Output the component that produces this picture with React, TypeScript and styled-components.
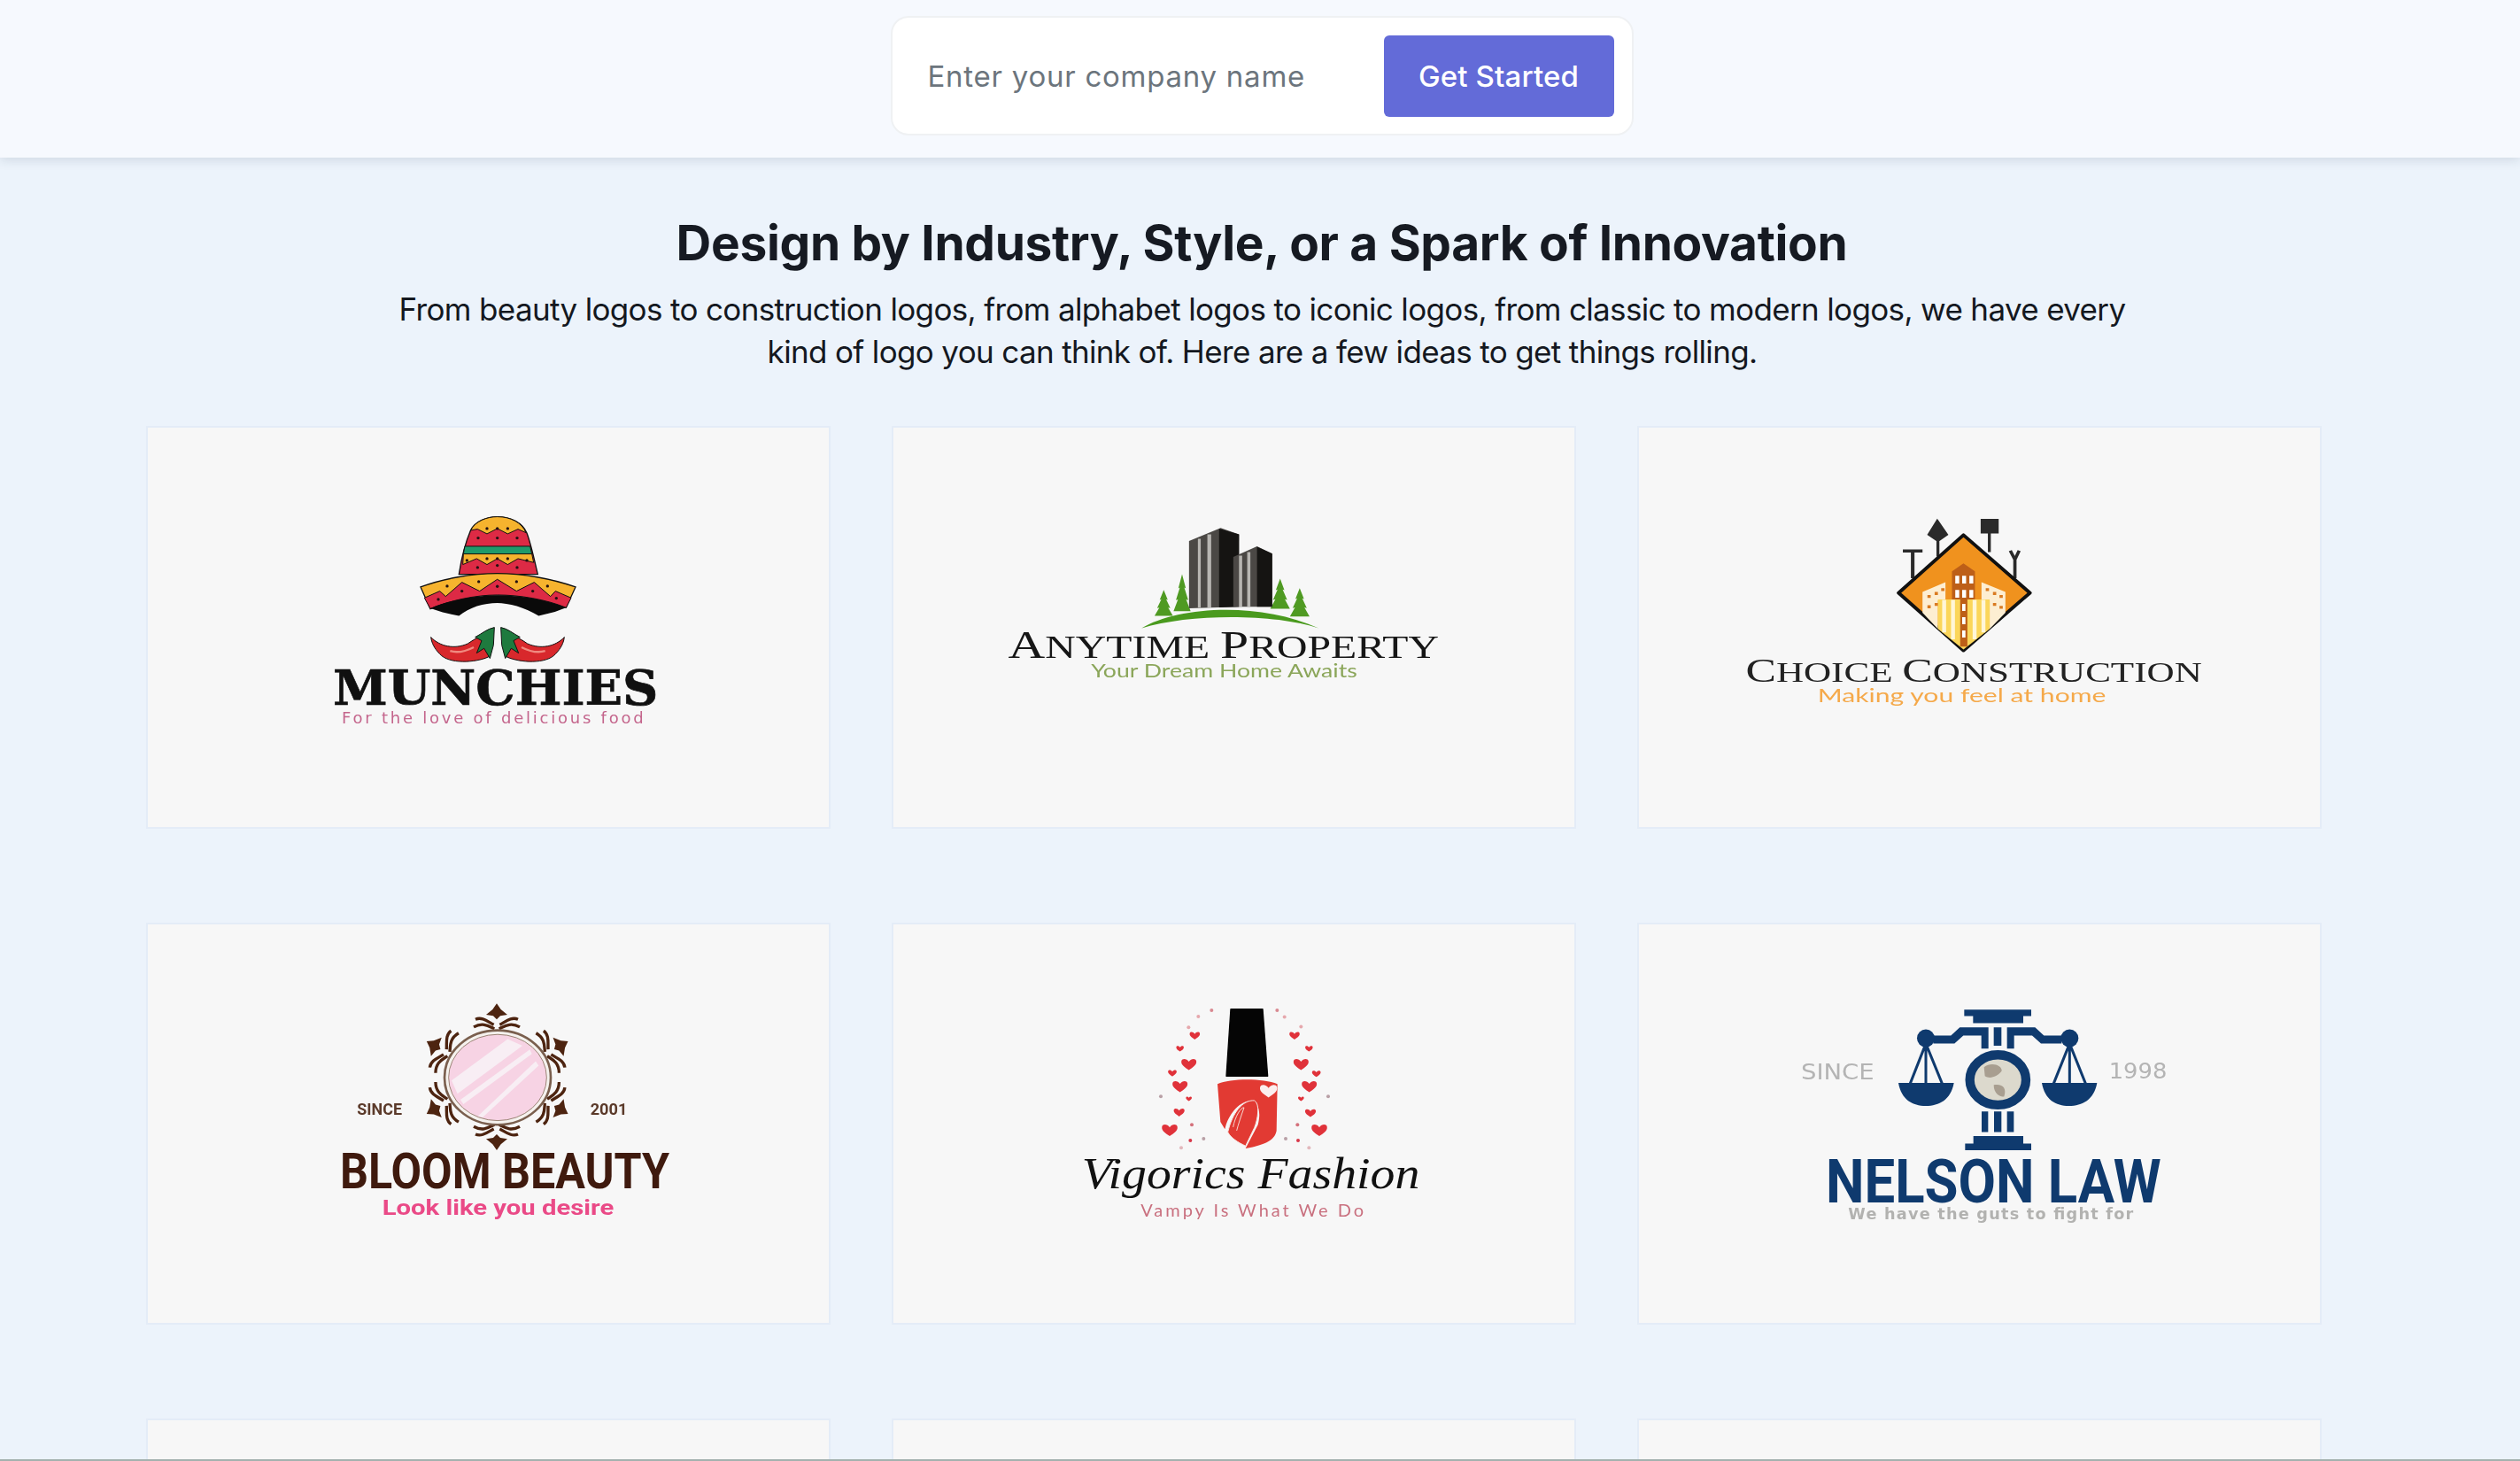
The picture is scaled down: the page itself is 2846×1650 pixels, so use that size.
import React from "react";
import styled, { createGlobalStyle } from "styled-components";

const Global = createGlobalStyle`
  html, body { margin: 0; padding: 0; background: #ecf3fb; }
  body { font-family: Inter, "Liberation Sans", sans-serif; }
  * { box-sizing: border-box; }
`;

const Page = styled.div`
  width: 100%;
  height: 1650px;
  display: flex;
  flex-direction: column;
  overflow: hidden;
  background: #ecf3fb;
`;

const Header = styled.header`
  flex: 0 0 178px;
  position: relative;
  z-index: 1;
  display: flex;
  justify-content: center;
  align-items: flex-start;
  padding-top: 18px;
  padding-left: 4px;
  background: #f6f9fe;
  box-shadow: 0 2px 12px rgba(40, 60, 90, 0.16);
`;

const CompanyForm = styled.form`
  width: 839px;
  height: 135px;
  display: flex;
  align-items: center;
  justify-content: space-between;
  padding: 0 20px 0 38px;
  background: #fff;
  border: 2px solid #eff1f3;
  border-radius: 20px;
`;

const CompanyInput = styled.input`
  width: 480px;
  border: 0;
  outline: 0;
  padding: 0 2px;
  background: transparent;
  font-family: Inter, "Liberation Sans", sans-serif;
  font-size: 33px;
  letter-spacing: 0.75px;
  color: #6c757d;
  &::placeholder { color: #6c757d; opacity: 1; }
`;

const SubmitButton = styled.button`
  width: 260px;
  height: 92px;
  border: 0;
  border-radius: 6px;
  background: #636bd8;
  color: #fff;
  font-family: Inter, "Liberation Sans", sans-serif;
  font-size: 33px;
  font-weight: 500;
  letter-spacing: 0.15px;
`;

const Main = styled.main`
  flex: 1;
  min-height: 0;
  overflow: hidden;
  padding-top: 60px;
`;

const Title = styled.h1`
  margin: 0 0 15px;
  padding-left: 4px;
  text-align: center;
  font-size: 55px;
  line-height: 72px;
  font-weight: 700;
  letter-spacing: -0.33px;
  color: #161a22;
`;

const Lead = styled.p`
  width: 1985px;
  margin: 0 0 60px 433px;
  text-align: center;
  font-size: 35px;
  line-height: 48px;
  font-weight: 400;
  letter-spacing: -0.65px;
  color: #14181f;
`;

const LogoGrid = styled.section`
  width: 2457px;
  margin-left: 165px;
  display: grid;
  grid-template-columns: repeat(3, 1fr);
  grid-auto-rows: 454.5px;
  column-gap: 69px;
  row-gap: 106px;
`;

const LogoCard = styled.article`
  background: #f7f7f7;
  border: 2px solid #e4ecf7;
`;

const LogoArt = styled.svg`
  display: block;
  width: 100%;
  height: 100%;
  filter: blur(0.55px);
`;

const BottomEdge = styled.div`
  flex: 0 0 2px;
  background: #a3b1ae;
`;

const LogoText = styled.text<{ $font: string; $weight?: number; $color: string; $italic?: boolean }>`
  font-family: ${(p) => p.$font};
  font-weight: ${(p) => p.$weight ?? 400};
  font-style: ${(p) => (p.$italic ? "italic" : "normal")};
  fill: ${(p) => p.$color};
`;

const SERIF = '"Liberation Serif", serif';
const SLAB = '"DejaVu Serif", serif';
const SANS = 'Lato, "Liberation Sans", sans-serif';
const DEJAVU = '"DejaVu Sans", sans-serif';
const ROBOTO = 'Roboto, "Liberation Sans", sans-serif';

const Munchies = () => (
  <g transform="translate(173 77) scale(.33333)">
    <path d="M535,265 C545,200 560,150 575,115 C590,85 630,70 665,70 C710,70 750,90 765,125 C780,165 790,215 802,265 Z" fill="#dd2a45" stroke="#111" strokeWidth="4" />
    <path d="M575,116 C590,85 630,70 665,70 C710,70 748,90 762,124 L735,112 L700,128 L665,110 L630,128 L598,112 Z" fill="#f6b32e" stroke="#111" strokeWidth="3" />
    <path d="M555,170 L776,170 L782,196 L550,196 Z" fill="#1f9a6b" stroke="#111" strokeWidth="3" />
    <path d="M550,196 L782,196 L788,225 L735,212 L700,232 L665,212 L630,232 L595,212 L548,232 Z" fill="#f6b32e" stroke="#111" strokeWidth="3" />
    <path d="M405,308 C480,280 580,262 665,262 C750,262 850,280 930,308 L898,378 C830,350 740,335 665,335 C590,335 500,355 438,382 Z" fill="#f6b32e" stroke="#111" strokeWidth="4" />
    <path d="M418,345 L470,322 L490,340 L545,292 L605,322 L665,282 L730,322 L790,292 L845,340 L862,322 L915,345 L898,378 C830,350 740,335 665,335 C590,335 500,355 438,382 Z" fill="#dd2a45" stroke="#111" strokeWidth="3" />
    <path d="M438,380 C500,352 600,336 665,336 C740,336 830,350 898,378 L860,392 L805,406 C760,376 700,362 665,362 C620,362 570,376 535,406 L480,394 Z" fill="#0a0a0a" />
    {[[630,110],[665,110],[700,110],[600,142],[665,142],[732,142],[562,218],[630,212],[665,212],[700,212],[765,218],[598,242],[665,235],[732,242],[495,305],[602,290],[730,290],[835,305],[545,322],[665,306],[785,322],[465,350],[865,346]].map(([x,y]) => (
      <circle key={`${x}-${y}`} cx={x} cy={y} r="5" fill="#211" />
    ))}
    {[0, 1].map((i) => (
      <g key={i} transform={i ? "translate(1332 0) scale(-1 1)" : undefined}>
        <path d="M440,478 C470,510 520,520 565,500 C580,490 595,480 610,475 L640,520 L635,545 C590,565 500,570 470,535 C450,515 442,495 440,478 Z" fill="#d8282c" stroke="#111" strokeWidth="3" />
        <path d="M505,525 C530,532 560,525 585,512" fill="none" stroke="#f08a80" strokeWidth="7" />
        <path d="M655,445 C630,450 615,465 590,478 L612,490 L595,532 L620,516 L640,550 L652,505 Z" fill="#1e7a3e" stroke="#111" strokeWidth="3" />
      </g>
    ))}
    <LogoText x="108" y="708" fontSize="165" textLength="1102" lengthAdjust="spacingAndGlyphs" stroke="#101010" strokeWidth="2" $font={SLAB} $weight={700} $color="#101010">MUNCHIES</LogoText>
    <LogoText x="138" y="770" fontSize="54" textLength="1022" lengthAdjust="spacing" $font={DEJAVU} $color="#c4658c">For the love of delicious food</LogoText>
  </g>
);

const Pine = ({ x, base, top, w }: { x: number; base: number; top: number; w: number }) => {
  const h = base - top;
  return (
    <path
      fill="#4f9a22"
      d={`M${x},${top} L${x + w * 0.22},${top + h * 0.38} L${x + w * 0.13},${top + h * 0.36} L${x + w * 0.36},${top + h * 0.7} L${x + w * 0.24},${top + h * 0.68} L${x + w / 2},${base} L${x - w / 2},${base} L${x - w * 0.24},${top + h * 0.68} L${x - w * 0.36},${top + h * 0.7} L${x - w * 0.13},${top + h * 0.36} L${x - w * 0.22},${top + h * 0.38} Z`}
    />
  );
};

const Anytime = () => (
  <g transform="translate(91 87) scale(.35714 .33333)">
    <Pine x={600} top={288} base={376} w={58} />
    <Pine x={658} top={235} base={360} w={54} />
    <Pine x={968} top={250} base={352} w={62} />
    <Pine x={1030} top={282} base={378} w={62} />
    <path d="M680,122 L780,78 L838,100 L838,345 L680,350 Z" fill="#4b4845" />
    <path d="M775,80 L838,100 L838,345 L775,347 Z" fill="#151412" />
    <path d="M708,115 h9 V348 h-9 Z M738,100 h12 V347 h-12 Z" fill="#b8b6b2" />
    <path d="M820,176 L895,140 L943,165 L943,345 L820,345 Z" fill="#4b4845" />
    <path d="M895,142 L943,165 L943,345 L895,345 Z" fill="#151412" />
    <path d="M838,172 h10 V345 h-10 Z M864,160 h10 V345 h-10 Z" fill="#b8b6b2" />
    <path d="M530,418 C640,345 900,325 1090,418 C950,368 680,368 530,418 Z" fill="#4a9a1e" />
    <LogoText x="108" y="518" fontSize="133" textLength="1362" lengthAdjust="spacingAndGlyphs" $font={SERIF} $color="#161616">
      A<tspan fontSize="110">NYTIME </tspan>P<tspan fontSize="110">ROPERTY</tspan>
    </LogoText>
    <LogoText x="370" y="585" fontSize="64" textLength="842" lengthAdjust="spacingAndGlyphs" $font={SANS} $color="#8ba65a">Your Dream Home Awaits</LogoText>
  </g>
);

const Choice = () => (
  <g transform="translate(89 77) scale(.36996 .33333)">
    <g stroke="#2a2a2a" fill="#2a2a2a">
      <path d="M565,186 H625 M595,186 V278" fill="none" strokeWidth="11" />
      <path d="M670,85 L698,130 L672,150 L645,130 Z M672,150 V205" strokeWidth="9" />
      <path d="M807,82 H853 V122 H807 Z M829,122 V190" strokeWidth="9" />
      <path d="M893,185 L907,215 L920,185 M907,215 V278" fill="none" strokeWidth="10" />
    </g>
    <path d="M750,132 L953,328 L750,523 L552,328 Z" fill="#f0921e" stroke="#111" strokeWidth="11" strokeLinejoin="round" />
    <path d="M625,325 L695,292 V355 H672 V450 L625,395 Z M805,292 L878,325 V395 L830,450 V355 H805 Z" fill="#fdeed2" />
    <path d="M672,350 H830 V450 L750,520 L672,450 Z" fill="#fbd65a" />
    <path d="M685,352 h12 V462 h-12 Z M712,352 h12 V485 h-12 Z M778,352 h12 V485 h-12 Z M805,352 h12 V462 h-12 Z" fill="#fff6d8" />
    <path d="M715,255 L750,228 L785,255 V350 H762 V510 H740 V350 H715 Z" fill="#bd5f18" />
    <path d="M725,270 h12 v26 h-12 Z M746,270 h12 v26 h-12 Z M768,270 h12 v26 h-12 Z M725,318 h12 v26 h-12 Z M746,318 h12 v26 h-12 Z M768,318 h12 v26 h-12 Z M746,365 h10 v24 h-10 Z M746,410 h10 v24 h-10 Z M746,455 h10 v24 h-10 Z" fill="#fff" />
    <path d="M640,335 h10 v10 h-10 Z M662,325 h10 v10 h-10 Z M682,312 h10 v10 h-10 Z M640,370 h10 v10 h-10 Z M662,362 h10 v10 h-10 Z M818,312 h10 v10 h-10 Z M840,325 h10 v10 h-10 Z M860,335 h10 v10 h-10 Z M840,362 h10 v10 h-10 Z M860,372 h10 v10 h-10 Z" fill="#d97a20" />
    <LogoText x="85" y="628" fontSize="115" textLength="1393" lengthAdjust="spacingAndGlyphs" $font={SERIF} $color="#222">
      C<tspan fontSize="96">HOICE </tspan>C<tspan fontSize="96">ONSTRUCTION</tspan>
    </LogoText>
    <LogoText x="305" y="698" fontSize="66" textLength="880" lengthAdjust="spacingAndGlyphs" $font={SANS} $color="#f5a94a">Making you feel at home</LogoText>
  </g>
);

const Ornament = ({ x, y, a }: { x: number; y: number; a: number }) => (
  <g transform={`translate(${x} ${y}) rotate(${a})`}>
    <path d="M0,-26 L14,-6 L36,12 L12,16 L0,28 L-12,16 L-36,12 L-14,-6 Z" fill="#4d2410" />
    <path d="M-72,28 C-50,18 -30,36 -10,46 M-78,54 C-46,36 -26,52 -8,60 M72,28 C50,18 30,36 10,46 M78,54 C46,36 26,52 8,60" fill="none" stroke="#4d2410" strokeWidth="10" />
  </g>
);

const Bloom = () => (
  <g transform="translate(193 66) scale(.33333)">
    {[[603,95,0],[822,210,60],[822,430,120],[603,540,180],[388,430,240],[388,210,300]].map(([x,y,a]) => (
      <Ornament key={a} x={x} y={y} a={a} />
    ))}
    <ellipse cx="606" cy="320" rx="180" ry="160" fill="#f5f2ee" stroke="#7a5f4e" strokeWidth="8" />
    <ellipse cx="606" cy="320" rx="166" ry="146" fill="#f7d3e4" stroke="#9b8474" strokeWidth="3" />
    <path d="M450,330 L640,190 L690,212 L470,375 Z M480,395 L715,225 L722,240 L490,410 Z M540,450 L735,265 L745,280 L555,455 Z" fill="#f8eef4" />
    <LogoText x="130" y="445" fontSize="54" textLength="152" lengthAdjust="spacingAndGlyphs" $font={ROBOTO} $weight={700} $color="#5b3a2a">SINCE</LogoText>
    <LogoText x="920" y="445" fontSize="54" textLength="125" lengthAdjust="spacingAndGlyphs" $font={ROBOTO} $weight={700} $color="#5b3a2a">2001</LogoText>
    <LogoText x="72" y="695" fontSize="165" textLength="1116" lengthAdjust="spacingAndGlyphs" $font={ROBOTO} $weight={700} $color="#3f1a0e">BLOOM BEAUTY</LogoText>
    <LogoText x="215" y="785" fontSize="70" textLength="785" lengthAdjust="spacingAndGlyphs" $font={ROBOTO} $weight={700} $color="#ea4a87">Look like you desire</LogoText>
  </g>
);

const Heart = ({ x, y, s, fill = "#e0323a" }: { x: number; y: number; s: number; fill?: string }) => (
  <path transform={`translate(${x} ${y}) scale(${s})`} d="M0,14 C-8,8 -20,2 -18,-8 C-16,-15 -5,-14 0,-6 C5,-14 16,-15 18,-8 C20,2 8,8 0,14 Z" fill={fill} />
);

const Vigorics = () => (
  <g transform="translate(181 66) scale(.33333)">
    <path d="M600,88 H708 L725,315 H585 Z" fill="#050505" stroke="#050505" strokeWidth="4" strokeLinejoin="round" />
    <path d="M555,342 C600,322 710,322 758,342 L755,500 C750,530 720,548 650,560 L692,480 C705,430 690,395 660,400 C625,405 590,450 580,495 L565,470 Z" fill="#e23a33" />
    <path d="M590,505 C605,440 640,395 680,398 C700,410 692,460 680,490 L650,552 C625,540 600,525 590,505 Z" fill="#e23a33" stroke="#f7e6e2" strokeWidth="3" />
    <path d="M608,488 C615,450 635,420 645,422 C635,450 625,480 620,500" fill="none" stroke="#f7d9d2" strokeWidth="3" />
    <Heart x={728} y={365} s={1.6} fill="#fbeeee" />
    {[[478,178,.95],[428,222,.7],[458,275,1.4],[402,305,.8],[428,350,1.4],[458,392,.55],[425,438,1],[393,498,1.45],[816,178,.95],[865,222,.7],[838,275,1.4],[890,307,.8],[866,350,1.4],[838,392,.55],[870,440,1],[900,498,1.45]].map(([x,y,s]) => (
      <Heart key={`${x}-${y}`} x={x} y={y} s={s} />
    ))}
    {[[535,92,"#d98a92"],[490,113,"#e6a8ad"],[457,150,"#e6a8ad"],[363,384,"#b9a0a6"],[468,480,"#d4717b"],[463,533,"#d8384a"],[508,527,"#b9a0a6"],[432,558,"#e2b8bc"],[757,92,"#d98a92"],[782,115,"#e6a8ad"],[838,148,"#e6a8ad"],[930,384,"#b9a0a6"],[826,480,"#d4717b"],[828,533,"#d8384a"],[786,527,"#b9a0a6"],[865,558,"#e2b8bc"]].map(([x,y,c]) => (
      <circle key={`${x}-${y}`} cx={x as number} cy={y as number} r="6" fill={c as string} />
    ))}
    <LogoText x="95" y="695" fontSize="150" textLength="1145" lengthAdjust="spacingAndGlyphs" $font={SERIF} $italic $color="#111">Vigorics Fashion</LogoText>
    <LogoText x="295" y="790" fontSize="60" textLength="755" lengthAdjust="spacing" $font={SANS} $color="#c9707f">Vampy Is What We Do</LogoText>
  </g>
);

const NAVY = "#0f3a6e";

const Nelson = () => (
  <g transform="translate(149 66) scale(.33333)">
    <path d="M655,90 H882 V112 H855 V136 H685 V112 H655 Z" fill={NAVY} />
    <path d="M755,150 H781 V212 H755 Z M800,150 H895 L925,178 H985 V205 H915 L885,178 H824 V222 H800 Z M737,150 H640 L610,178 H550 V205 H622 L652,178 H713 V222 H737 Z" fill={NAVY} />
    <circle cx="525" cy="187" r="30" fill={NAVY} />
    <circle cx="1012" cy="187" r="30" fill={NAVY} />
    <path d="M525,205 L472,340 M525,205 V340 M525,205 L580,340 M1012,205 L958,340 M1012,205 V340 M1012,205 L1066,340" stroke={NAVY} strokeWidth="9" fill="none" />
    <path d="M432,338 H620 C610,395 570,416 525,416 C480,416 442,395 432,338 Z M918,338 H1105 C1095,395 1055,416 1010,416 C965,416 928,395 918,338 Z" fill={NAVY} />
    <ellipse cx="769" cy="328" rx="95" ry="85" fill="#dcd9cd" stroke={NAVY} strokeWidth="31" />
    <path d="M722,285 C745,265 785,278 782,298 C765,320 740,325 725,315 Z M755,345 C785,340 800,355 790,385 C775,385 755,375 755,345 Z" fill="#a89e90" />
    <path d="M714,435 H736 V505 H714 Z M756,435 H781 V505 H756 Z M800,435 H823 V505 H800 Z M686,518 H855 V544 H882 V566 H658 V544 H686 Z" fill={NAVY} />
    <LogoText x="102" y="326" fontSize="72" textLength="248" lengthAdjust="spacingAndGlyphs" $font={DEJAVU} $color="#b4b4b4">SINCE</LogoText>
    <LogoText x="1145" y="324" fontSize="72" textLength="197" lengthAdjust="spacingAndGlyphs" $font={DEJAVU} $color="#b4b4b4">1998</LogoText>
    <LogoText x="186" y="742" fontSize="207" textLength="1136" lengthAdjust="spacingAndGlyphs" $font={ROBOTO} $weight={700} $color={NAVY}>NELSON LAW</LogoText>
    <LogoText x="262" y="800" fontSize="53" textLength="966" lengthAdjust="spacing" $font={DEJAVU} $weight={700} $color="#b2b2b0">We have the guts to fight for</LogoText>
  </g>
);

const logos = [Munchies, Anytime, Choice, Bloom, Vigorics, Nelson, null, null, null];

export default function App() {
  return (
    <Page>
      <Global />
      <Header>
        <CompanyForm onSubmit={(e) => e.preventDefault()}>
          <CompanyInput placeholder="Enter your company name" />
          <SubmitButton type="submit">Get Started</SubmitButton>
        </CompanyForm>
      </Header>
      <Main>
        <Title>Design by Industry, Style, or a Spark of Innovation</Title>
        <Lead>
          From beauty logos to construction logos, from alphabet logos to iconic logos, from classic to modern logos, we have every kind of logo you can think of. Here are a few ideas to get things rolling.
        </Lead>
        <LogoGrid>
          {logos.map((Logo, i) => (
            <LogoCard key={i}>
              {Logo && (
                <LogoArt viewBox="0 0 769 450" role="img">
                  <Logo />
                </LogoArt>
              )}
            </LogoCard>
          ))}
        </LogoGrid>
      </Main>
      <BottomEdge />
    </Page>
  );
}
